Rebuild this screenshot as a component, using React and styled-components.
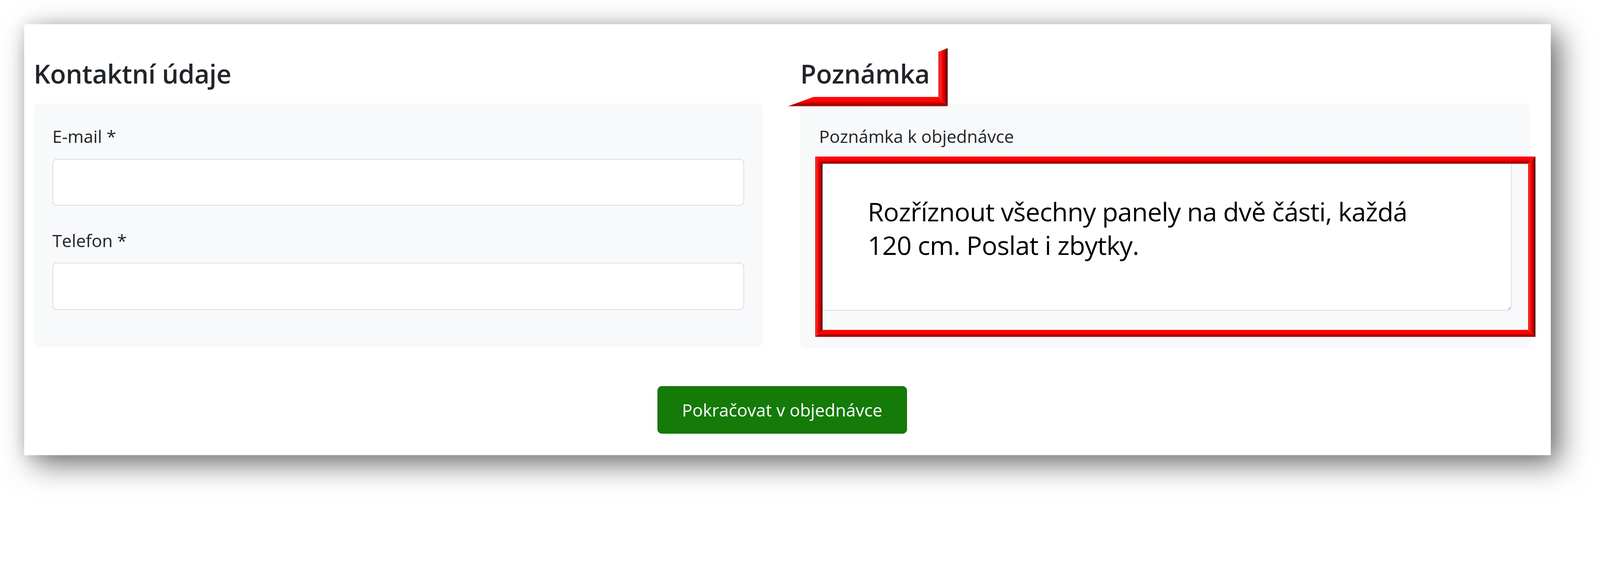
import React, { useEffect, useState } from 'react';
import styled, { createGlobalStyle } from 'styled-components';

const DESIGN_WIDTH = 4612;

const GlobalStyle = createGlobalStyle`
  html,
  body {
    margin: 0;
    background: #ffffff;
    overflow: hidden;
  }

  body {
    font-family: 'Open Sans', 'Noto Sans', sans-serif;
    color: #212529;
  }
`;

const Page = styled.div`
  width: 4612px;
  height: 1455px;
  padding: 70px 0 0 70px;
  box-sizing: border-box;
  overflow: hidden;
`;

const Card = styled.main`
  width: 4400px;
  height: 1243px;
  box-sizing: border-box;
  padding: 97px 58px 65px 27px;
  background: #ffffff;
  box-shadow: 26px 26px 80px rgba(0, 0, 0, 0.55), 0 0 40px rgba(0, 0, 0, 0.1);
  display: flex;
  flex-direction: column;
`;

const Columns = styled.div`
  display: grid;
  grid-template-columns: 2102px 2105px;
  column-gap: 108px;
`;

const Section = styled.section`
  display: flex;
  flex-direction: column;
`;

const Heading = styled.h4`
  position: relative;
  margin: 0 0 39px;
  font-size: 75px;
  line-height: 92px;
  font-weight: 600;
  letter-spacing: -0.5px;
  color: #212529;
`;

const Panel = styled.div`
  background: #f8f9fa;
  border-radius: 15px;
  padding: 58px 54px 107px;
`;

const Field = styled.div`
  display: flex;
  flex-direction: column;

  & + & {
    margin-top: 62px;
  }
`;

const Label = styled.label`
  display: block;
  margin-bottom: 27px;
  font-size: 50px;
  line-height: 75px;
  color: #212529;
`;

const Control = styled.div`
  position: relative;
`;

const Input = styled.input`
  display: block;
  width: 100%;
  height: 136px;
  box-sizing: border-box;
  padding: 0 36px;
  border: 3px solid #dadee3;
  border-radius: 13px;
  background: #ffffff;
  font-family: inherit;
  font-size: 50px;
  color: #212529;
  outline: none;
`;

const TextArea = styled.textarea`
  display: block;
  width: 100%;
  height: 438px;
  box-sizing: border-box;
  padding: 102px 40px 0 138px;
  border: 3px solid #dadee3;
  border-radius: 13px;
  background: #ffffff;
  font-family: inherit;
  font-size: 75px;
  line-height: 96px;
  letter-spacing: -1px;
  color: #000000;
  resize: vertical;
  outline: none;
`;

const Overlay = styled.svg`
  position: absolute;
  left: ${(p) => p.$left}px;
  top: ${(p) => p.$top}px;
  pointer-events: none;
`;

const Actions = styled.div`
  display: flex;
  justify-content: center;
  margin-top: 111px;
`;

const Button = styled.button`
  height: 137px;
  padding: 0 71px;
  border: none;
  border-radius: 13px;
  background: #147a08;
  color: #ffffff;
  font-family: inherit;
  font-size: 50px;
  cursor: pointer;
`;

// bevel gradients shared by both red annotation marks
const Bevel = ({ id }) => (
  <defs>
    <linearGradient id={`${id}-v`} x1="0" y1="0" x2="1" y2="0">
      <stop offset="0" stopColor="#d00000" />
      <stop offset="0.15" stopColor="#ff2c2c" />
      <stop offset="0.45" stopColor="#f00000" />
      <stop offset="0.75" stopColor="#b00000" />
      <stop offset="1" stopColor="#360000" />
    </linearGradient>
    <linearGradient id={`${id}-h`} x1="0" y1="0" x2="0" y2="1">
      <stop offset="0" stopColor="#ff0a0a" />
      <stop offset="0.5" stopColor="#ff0000" />
      <stop offset="0.68" stopColor="#c40000" />
      <stop offset="0.86" stopColor="#8c0808" />
      <stop offset="1" stopColor="#d42424" />
    </linearGradient>
  </defs>
);

const HeadingMark = () => (
  <Overlay $left={-36} $top={-28} width="461" height="168" viewBox="0 0 461 168">
    <Bevel id="hm" />
    <polygon points="434,11 461,0 461,168 434,141" fill="url(#hm-v)" />
    <polygon points="0,168 74,141 434,141 461,168" fill="url(#hm-h)" />
  </Overlay>
);

const FrameMark = ({ w, h, t }) => (
  <Overlay $left={-11} $top={-7} width={w} height={h} viewBox={`0 0 ${w} ${h}`}>
    <Bevel id="fm" />
    <polygon points={`0,0 ${w},0 ${w - t},${t} ${t},${t}`} fill="url(#fm-h)" />
    <polygon points={`${t},${h - t} ${w - t},${h - t} ${w},${h} 0,${h}`} fill="url(#fm-h)" />
    <polygon points={`0,0 ${t},${t} ${t},${h - t} 0,${h}`} fill="url(#fm-v)" />
    <polygon points={`${w - t},${t} ${w},0 ${w},${h} ${w - t},${h - t}`} fill="url(#fm-v)" />
  </Overlay>
);

const note = 'Rozříznout všechny panely na dvě části, každá\n120 cm. Poslat i zbytky.';

const useFitScale = () => {
  const [scale, setScale] = useState(() => window.innerWidth / DESIGN_WIDTH);

  useEffect(() => {
    const onResize = () => setScale(window.innerWidth / DESIGN_WIDTH);
    window.addEventListener('resize', onResize);
    return () => window.removeEventListener('resize', onResize);
  }, []);

  return scale;
};

const App = () => {
  const scale = useFitScale();

  return (
    <>
      <GlobalStyle />
      <Page style={{ zoom: scale }}>
        <Card>
          <Columns>
            <Section>
              <Heading>Kontaktní údaje</Heading>
              <Panel>
                <Field>
                  <Label htmlFor="email">E-mail *</Label>
                  <Input id="email" type="email" />
                </Field>
                <Field>
                  <Label htmlFor="phone">Telefon *</Label>
                  <Input id="phone" type="tel" />
                </Field>
              </Panel>
            </Section>

            <Section>
              <Heading>
                Poznámka
                <HeadingMark />
              </Heading>
              <Panel>
                <Field>
                  <Label htmlFor="note">Poznámka k objednávce</Label>
                  <Control>
                    <TextArea id="note" value={note} readOnly />
                    <FrameMark w={2076} h={521} t={21} />
                  </Control>
                </Field>
              </Panel>
            </Section>
          </Columns>

          <Actions>
            <Button type="button">Pokračovat v objednávce</Button>
          </Actions>
        </Card>
      </Page>
    </>
  );
};

export default App;
